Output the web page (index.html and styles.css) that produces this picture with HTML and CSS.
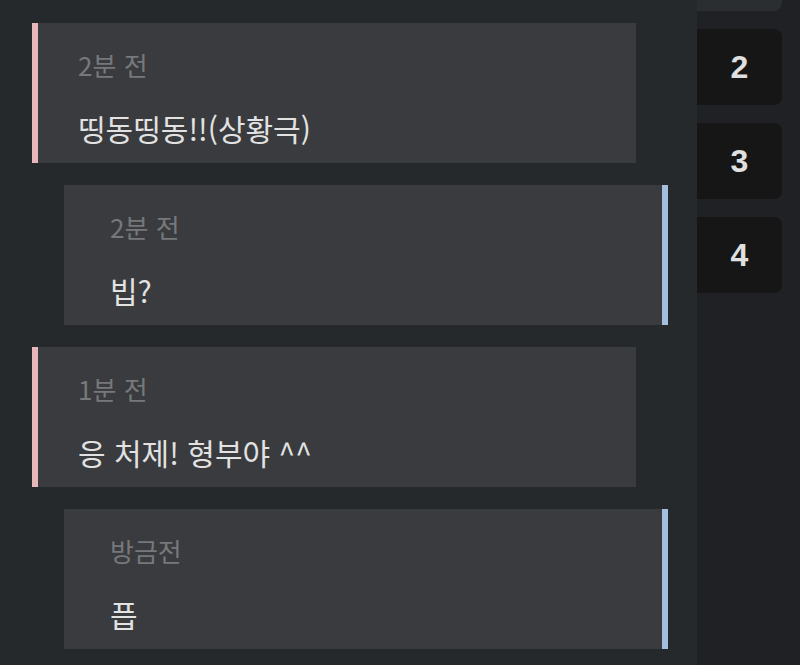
FILE: index.html
```html
<!DOCTYPE html>
<html lang="ko">
<head>
  <meta charset="UTF-8">
  <meta name="viewport" content="width=device-width, initial-scale=1.0">
  <title>대화</title>
  <link rel="stylesheet" href="styles.css">
</head>
<body>
  <div class="layout">
    <main class="chat">
      <div class="message left">
        <div class="time">2분 전</div>
        <div class="text">띵동띵동!!(상황극)</div>
      </div>
      <div class="message right">
        <div class="time">2분 전</div>
        <div class="text">빕?</div>
      </div>
      <div class="message left">
        <div class="time">1분 전</div>
        <div class="text">응 처제! 형부야 ^^</div>
      </div>
      <div class="message right">
        <div class="time">방금전</div>
        <div class="text">픕</div>
      </div>
    </main>

    <nav class="pages">
      <button type="button" class="page active" aria-label="1"></button>
      <button type="button" class="page">2</button>
      <button type="button" class="page">3</button>
      <button type="button" class="page">4</button>
    </nav>
  </div>
</body>
</html>
```

FILE: styles.css
```css
body {
  margin: 0;
  background-color: #1f2124;
  font-family: "Noto Sans CJK KR", "Noto Sans", sans-serif;
  overflow: hidden;
}

.layout {
  display: flex;
  height: 665px;
}

.chat {
  width: 697px;
  flex-shrink: 0;
  box-sizing: border-box;
  padding: 23px 0 0 32px;
  background-color: #26292c;
  display: flex;
  flex-direction: column;
  gap: 22px;
}

.message {
  width: 604px;
  height: 140px;
  box-sizing: border-box;
  background-color: #393b3e;
  padding-top: 26px;
}

.message.left {
  border-left: 6px solid #e6b6b9;
  padding-left: 40px;
}

.message.right {
  margin-left: 32px;
  border-right: 6px solid #a4bedf;
  padding-left: 46px;
}

.time {
  font-size: 26px;
  line-height: 32px;
  color: #76787b;
}

.text {
  margin-top: 27px;
  font-size: 30px;
  line-height: 40px;
  color: #e2e2e2;
}

.pages {
  display: flex;
  flex-direction: column;
  gap: 18px;
  width: 85px;
}

.page {
  height: 76px;
  border: none;
  border-radius: 0 8px 8px 0;
  background-color: #161616;
  color: #e0e0e0;
  font-family: "Liberation Sans", Arial, sans-serif;
  font-weight: bold;
  font-size: 32px;
  padding: 0;
}

.page.active {
  margin-top: -65px;
  background-color: #2b2e31;
}
```
